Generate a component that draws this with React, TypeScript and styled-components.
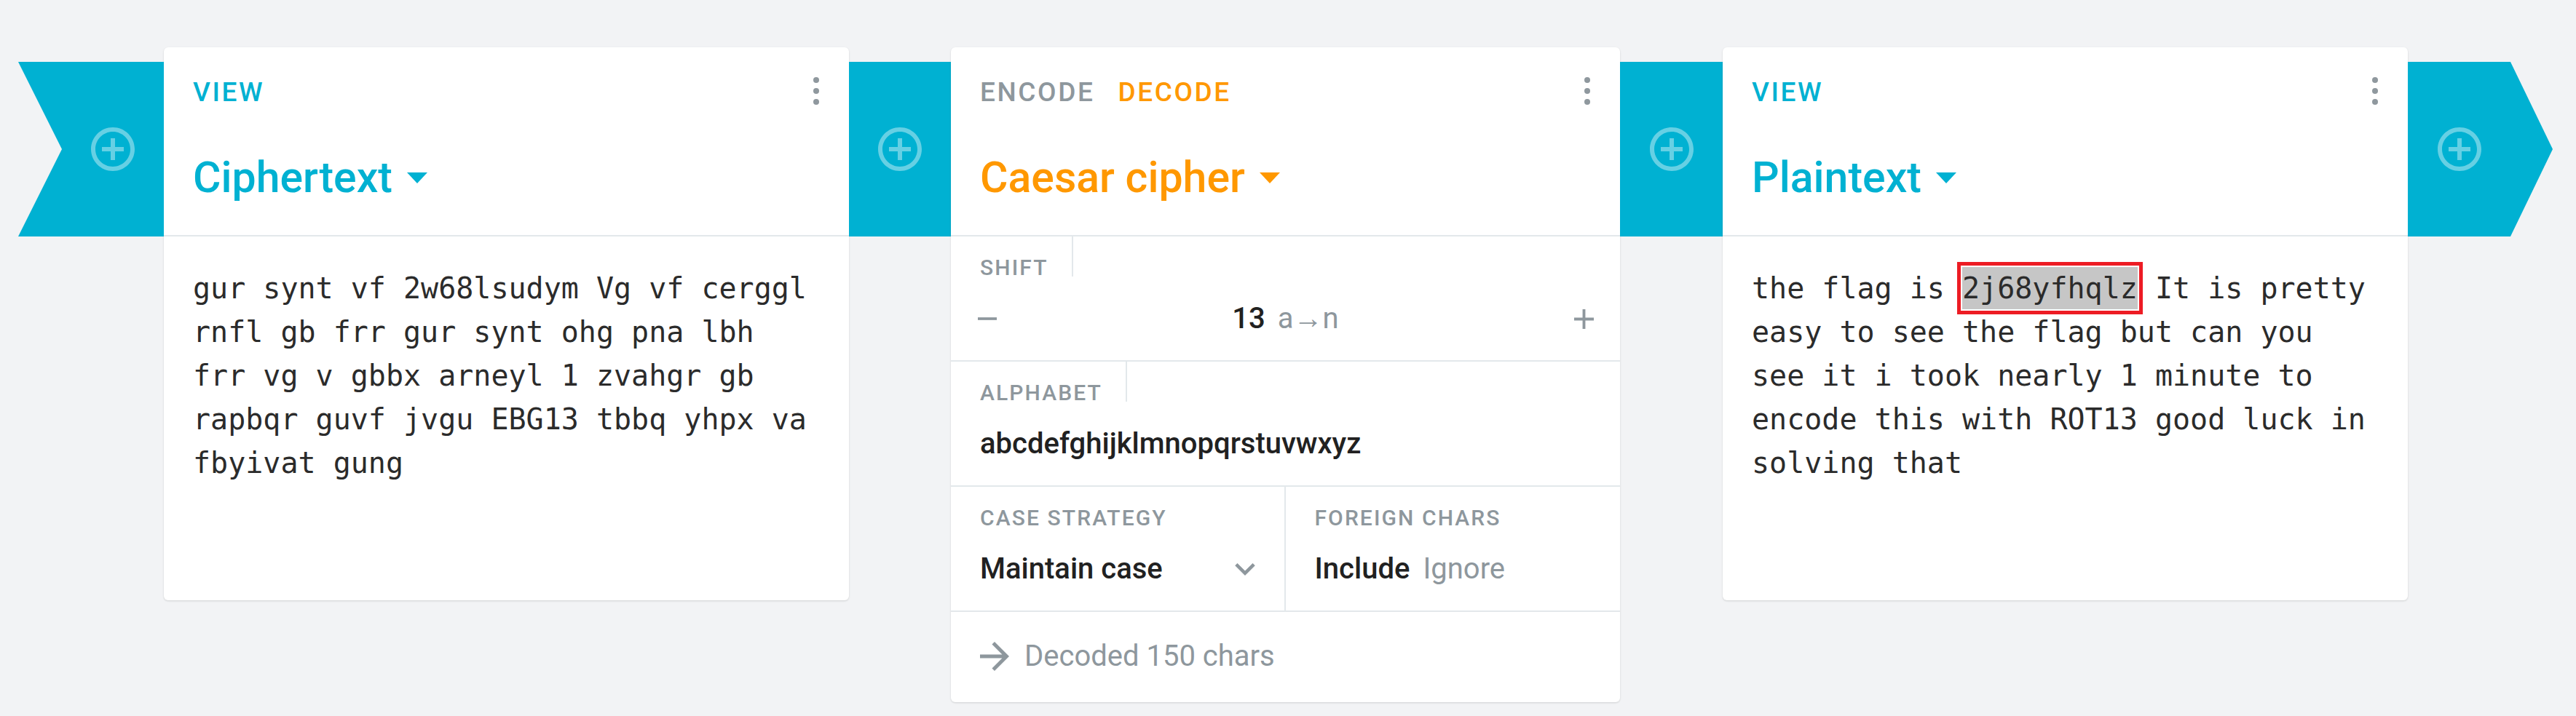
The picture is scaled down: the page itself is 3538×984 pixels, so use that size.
import React from "react";
import styled, { createGlobalStyle } from "styled-components";

const BLUE = "#00b1d2";
const ORANGE = "#ff9800";
const GRAY = "#8e979d";
const INK = "#212121";
const LINE = "#e3e8eb";

const Global = createGlobalStyle`
  *, *::before, *::after { box-sizing: border-box; }
  html, body { margin: 0; padding: 0; background: #f2f3f5; }
  body {
    font-family: Roboto, "Noto Sans", Arial, sans-serif;
    width: 3538px;
    height: 984px;
    overflow: hidden;
  }
`;

const Pipeline = styled.main`
  display: flex;
  align-items: flex-start;
  padding: 65px 0 0 25px;
`;

const Band = styled.div<{ $w: number }>`
  flex: none;
  width: ${(p) => p.$w}px;
  height: 240px;
  margin-top: 20px;
  background: ${BLUE};
  display: flex;
  align-items: center;
  justify-content: center;
`;

const LeftCap = styled(Band)`
  padding-left: 60px;
  clip-path: polygon(0 0, 100% 0, 100% 100%, 0 100%, 60px 50%);
`;

const RightCap = styled(Band)`
  padding-right: 58px;
  clip-path: polygon(0 0, 141px 0, 100% 50%, 141px 100%, 0 100%);
`;

const AddButton = styled.button`
  border: 0;
  padding: 0;
  background: none;
  width: 72px;
  height: 72px;
  display: flex;
  color: rgba(255, 255, 255, 0.4);
  cursor: pointer;
`;

const Card = styled.section<{ $w: number }>`
  flex: none;
  width: ${(p) => p.$w}px;
  background: #fff;
  border-radius: 6px;
  box-shadow: 0 1px 3px rgba(0, 0, 0, 0.1), 0 1px 2px rgba(0, 0, 0, 0.05);
  overflow: hidden;
`;

const Header = styled.header`
  height: 260px;
  padding: 43px 41px 0 40px;
  border-bottom: 2px solid ${LINE};
  display: flex;
  flex-direction: column;
`;

const TopRow = styled.div`
  display: flex;
  align-items: center;
  justify-content: space-between;
  height: 37px;
`;

const Modes = styled.div`
  display: flex;
  gap: 32px;
`;

const Mode = styled.span<{ $color: string }>`
  font-size: 37px;
  line-height: 37px;
  font-weight: 500;
  letter-spacing: 2.6px;
  color: ${(p) => p.$color};
`;

const Kebab = styled.div`
  display: flex;
  flex-direction: column;
  gap: 7px;
  margin-top: -3px;
`;

const Dot = styled.span`
  width: 8px;
  height: 8px;
  border-radius: 50%;
  background: #8f989e;
`;

const TitleRow = styled.div`
  margin-top: 64px;
  height: 70px;
  display: flex;
  align-items: center;
`;

const Title = styled.h2<{ $color: string }>`
  margin: 0;
  font-size: 59px;
  line-height: 70px;
  font-weight: 500;
  color: ${(p) => p.$color};
`;

const Caret = styled.span<{ $color: string }>`
  margin-left: 20px;
  width: 0;
  height: 0;
  border-left: 14.5px solid transparent;
  border-right: 14.5px solid transparent;
  border-top: 15px solid ${(p) => p.$color};
`;

const TextBody = styled.div`
  height: 500px;
  padding: 41px 40px 40px 40px;
  font-family: "DejaVu Sans Mono", "Liberation Mono", monospace;
  font-size: 40px;
  line-height: 60px;
  color: #2b2b2b;
  overflow-wrap: break-word;
`;

const Flag = styled.mark`
  display: inline-block;
  line-height: 58px;
  background: #c6c6c6;
  color: inherit;
  box-shadow: 0 0 0 2px #fff, 0 0 0 7px #ed1c24;
`;

const Field = styled.div`
  height: 172px;
  border-bottom: 2px solid ${LINE};
  display: flex;
  flex-direction: column;
`;

const SplitField = styled.div`
  height: 172px;
  border-bottom: 2px solid ${LINE};
  display: grid;
  grid-template-columns: 1fr 1fr;
`;

const Column = styled.div<{ $divider?: boolean }>`
  display: flex;
  flex-direction: column;
  border-right: ${(p) => (p.$divider ? `2px solid ${LINE}` : "0")};
`;

const FieldLabel = styled.div<{ $boxed?: boolean }>`
  align-self: flex-start;
  height: 55px;
  padding: 31px ${(p) => (p.$boxed ? 32 : 0)}px 0 40px;
  border-right: ${(p) => (p.$boxed ? `2px solid ${LINE}` : "0")};
  font-size: 30px;
  line-height: 24px;
  font-weight: 500;
  letter-spacing: 2.1px;
  color: ${GRAY};
  white-space: nowrap;
`;

const ValueRow = styled.div<{ $pl?: number; $pr?: number }>`
  margin-top: 28px;
  height: 60px;
  padding: 0 ${(p) => p.$pr ?? 40}px 0 ${(p) => p.$pl ?? 40}px;
  display: flex;
  align-items: center;
  justify-content: space-between;
  font-size: 40px;
  line-height: 60px;
  color: ${INK};
  white-space: nowrap;
`;

const IconButton = styled.button`
  border: 0;
  padding: 0;
  background: none;
  display: flex;
  color: ${GRAY};
`;

const Shift = styled.div`
  display: flex;
  align-items: baseline;
`;

const Strong = styled.span`
  font-weight: 500;
  color: ${INK};
`;

const Muted = styled.span<{ $ml?: number }>`
  margin-left: ${(p) => p.$ml ?? 0}px;
  color: ${GRAY};
  font-weight: 400;
`;

const Value = styled.span`
  font-weight: 500;
  color: ${INK};
`;

const Options = styled.div`
  display: flex;
  gap: 18px;
`;

const Footer = styled.footer`
  height: 124px;
  padding: 31px 40px 0 40px;
  display: flex;
  align-items: flex-start;
  gap: 21px;
  font-size: 40px;
  line-height: 60px;
  color: ${GRAY};
`;

const ArrowIcon = styled.svg`
  margin-top: 10px;
  flex: none;
`;

const PlusCircle = () => (
  <svg width="72" height="72" viewBox="0 0 24 24" fill="currentColor">
    <path d="M13 7h-2v4H7v2h4v4h2v-4h4v-2h-4V7zm-1-5C6.48 2 2 6.48 2 12s4.48 10 10 10 10-4.48 10-10S17.52 2 12 2zm0 18c-4.41 0-8-3.59-8-8s3.59-8 8-8 8 3.59 8 8-3.59 8-8 8z" />
  </svg>
);

const Add = () => (
  <AddButton aria-label="Add step">
    <PlusCircle />
  </AddButton>
);

const MoreMenu = () => (
  <Kebab aria-label="More">
    <Dot />
    <Dot />
    <Dot />
  </Kebab>
);

const MinusIcon = () => (
  <svg width="26" height="26" viewBox="5 5 14 14" fill="currentColor">
    <path d="M19 13H5v-2h14v2z" />
  </svg>
);

const PlusIcon = () => (
  <svg width="27" height="27" viewBox="5 5 14 14" fill="currentColor">
    <path d="M19 13h-6v6h-2v-6H5v-2h6V5h2v6h6v2z" />
  </svg>
);

const Chevron = () => (
  <svg width="28" height="17" viewBox="6 8.59 12 7.41" fill={GRAY}>
    <path d="M16.59 8.59L12 13.17 7.41 8.59 6 10l6 6 6-6z" />
  </svg>
);

const Arrow = () => (
  <ArrowIcon width="40" height="40" viewBox="4 4 16 16" fill={GRAY}>
    <path d="M12 4l-1.41 1.41L16.17 11H4v2h12.17l-5.58 5.59L12 20l8-8z" />
  </ArrowIcon>
);

export default function App() {
  return (
    <>
      <Global />
      <Pipeline>
        <LeftCap $w={200}>
          <Add />
        </LeftCap>

        <Card $w={941}>
          <Header>
            <TopRow>
              <Modes>
                <Mode $color={BLUE}>VIEW</Mode>
              </Modes>
              <MoreMenu />
            </TopRow>
            <TitleRow>
              <Title $color={BLUE}>Ciphertext</Title>
              <Caret $color={BLUE} />
            </TitleRow>
          </Header>
          <TextBody>
            gur synt vf 2w68lsudym Vg vf cerggl rnfl gb frr gur synt ohg pna lbh
            frr vg v gbbx arneyl 1 zvahgr gb rapbqr guvf jvgu EBG13 tbbq yhpx va
            fbyivat gung
          </TextBody>
        </Card>

        <Band $w={140}>
          <Add />
        </Band>

        <Card $w={919}>
          <Header>
            <TopRow>
              <Modes>
                <Mode $color={GRAY}>ENCODE</Mode>
                <Mode $color={ORANGE}>DECODE</Mode>
              </Modes>
              <MoreMenu />
            </TopRow>
            <TitleRow>
              <Title $color={ORANGE}>Caesar cipher</Title>
              <Caret $color={ORANGE} />
            </TitleRow>
          </Header>

          <Field>
            <FieldLabel $boxed>SHIFT</FieldLabel>
            <ValueRow $pl={37} $pr={36}>
              <IconButton aria-label="Decrease">
                <MinusIcon />
              </IconButton>
              <Shift>
                <Strong>13</Strong>
                <Muted $ml={17}>a→n</Muted>
              </Shift>
              <IconButton aria-label="Increase">
                <PlusIcon />
              </IconButton>
            </ValueRow>
          </Field>

          <Field>
            <FieldLabel $boxed>ALPHABET</FieldLabel>
            <ValueRow>
              <Value>abcdefghijklmnopqrstuvwxyz</Value>
            </ValueRow>
          </Field>

          <SplitField>
            <Column $divider>
              <FieldLabel>CASE STRATEGY</FieldLabel>
              <ValueRow>
                <Value>Maintain case</Value>
                <Chevron />
              </ValueRow>
            </Column>
            <Column>
              <FieldLabel>FOREIGN CHARS</FieldLabel>
              <ValueRow>
                <Options>
                  <Value>Include</Value>
                  <Muted>Ignore</Muted>
                </Options>
              </ValueRow>
            </Column>
          </SplitField>

          <Footer>
            <Arrow />
            <span>Decoded 150 chars</span>
          </Footer>
        </Card>

        <Band $w={141}>
          <Add />
        </Band>

        <Card $w={941}>
          <Header>
            <TopRow>
              <Modes>
                <Mode $color={BLUE}>VIEW</Mode>
              </Modes>
              <MoreMenu />
            </TopRow>
            <TitleRow>
              <Title $color={BLUE}>Plaintext</Title>
              <Caret $color={BLUE} />
            </TitleRow>
          </Header>
          <TextBody>
            the flag is <Flag>2j68yfhqlz</Flag> It is pretty easy to see the flag
            but can you see it i took nearly 1 minute to encode this with ROT13
            good luck in solving that
          </TextBody>
        </Card>

        <RightCap $w={199}>
          <Add />
        </RightCap>
      </Pipeline>
    </>
  );
}
